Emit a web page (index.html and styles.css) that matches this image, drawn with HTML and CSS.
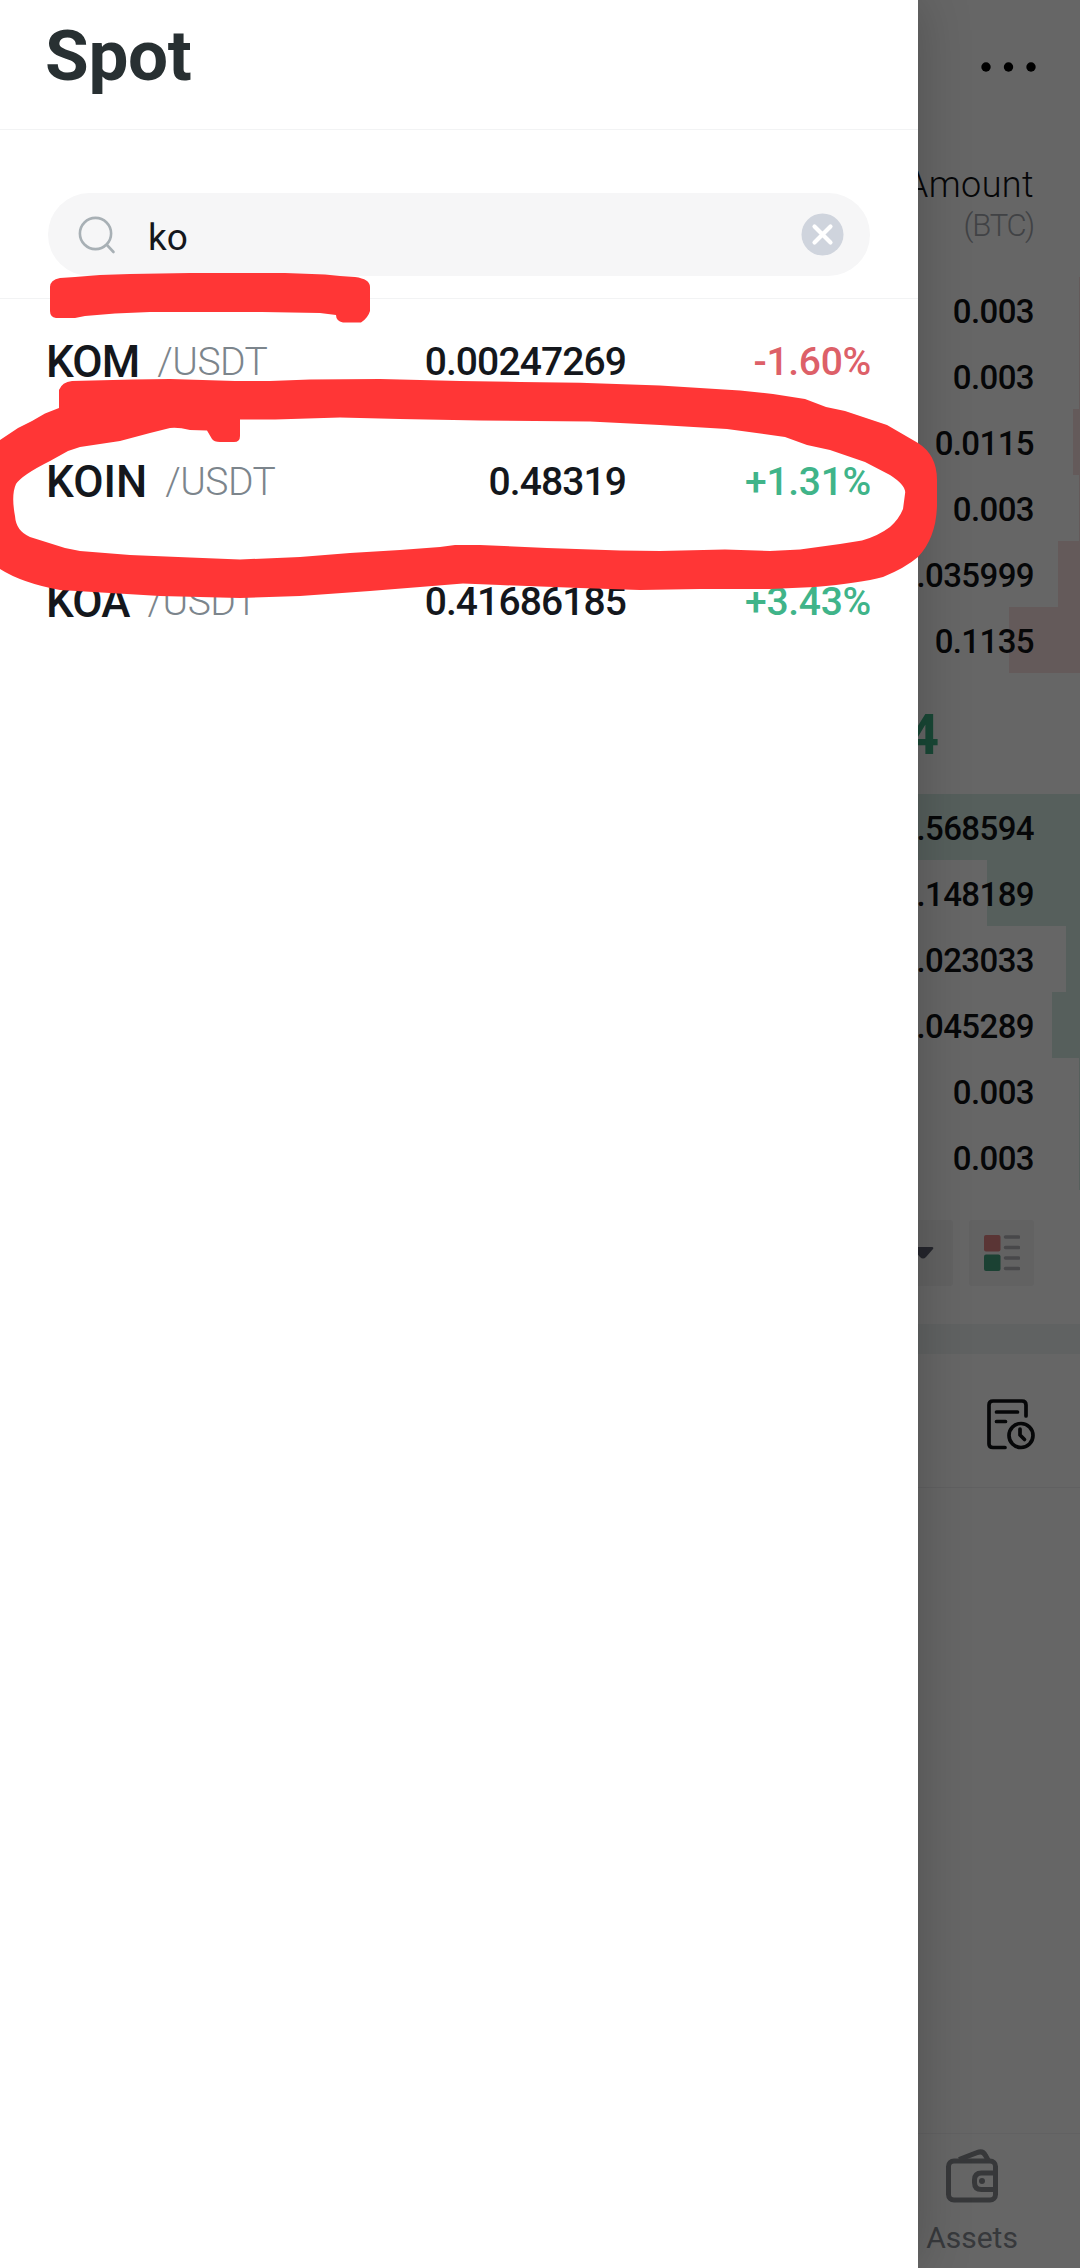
FILE: index.html
```
<!DOCTYPE html>
<html lang="en">
<head>
    <meta charset="UTF-8">
    <meta name="viewport" content="width=device-width, initial-scale=1.0">
    <title>Spot</title>
    <link rel="stylesheet" href="styles.css">
</head>
<body>

<div class="screen">
    <!-- trade page, dimmed behind the drawer -->
    <div class="trade">
        <div class="topbar">
            <svg width="56" height="12" viewBox="0 0 56 12">
                <circle cx="6" cy="6" r="4.7"/>
                <circle cx="28.500" cy="6" r="4.7"/>
                <circle cx="51" cy="6" r="4.7"/>
            </svg>
        </div>
        <div class="book-head">
            <div class="amount">Amount</div>
            <div class="unit">(BTC)</div>
        </div>
        <div class="asks">
            <div class="level"><i class="bar" style="width:1px"></i><span>0.003</span></div>
            <div class="level"><i class="bar" style="width:1px"></i><span>0.003</span></div>
            <div class="level"><i class="bar" style="width:7px"></i><span>0.0115</span></div>
            <div class="level"><i class="bar" style="width:1px"></i><span>0.003</span></div>
            <div class="level"><i class="bar" style="width:22px"></i><span>.035999</span></div>
            <div class="level"><i class="bar" style="width:71px"></i><span>0.1135</span></div>
        </div>
        <div class="last-price">4</div>
        <div class="bids">
            <div class="level"><i class="bar" style="width:180px"></i><span>.568594</span></div>
            <div class="level"><i class="bar" style="width:93px"></i><span>.148189</span></div>
            <div class="level"><i class="bar" style="width:14px"></i><span>.023033</span></div>
            <div class="level"><i class="bar" style="width:28px"></i><span>.045289</span></div>
            <div class="level"><i class="bar" style="width:1px"></i><span>0.003</span></div>
            <div class="level"><i class="bar" style="width:1px"></i><span>0.003</span></div>
        </div>
        <div class="tools">
            <div class="tool tool-select">
                <svg width="22" height="12" viewBox="0 0 22 12"><path d="M2 0h18q2 0 1 2l-7 8q-3 3-6 0l-7-8q-1-2 1-2z" fill="#5c6070"/></svg>
            </div>
            <div class="tool tool-depth">
                <svg width="36" height="36" viewBox="0 0 36 36">
                    <rect x="0" y="0" width="16.5" height="16.5" rx="2" fill="#e08484"/>
                    <rect x="0" y="19.5" width="16.5" height="16.5" rx="2" fill="#45a27f"/>
                    <path d="M21.500 2h13M21.500 12.500h13M21.500 23h13M21.500 33.500h13" stroke="#b4b4b8" stroke-width="3.6" stroke-linecap="round"/>
                </svg>
            </div>
        </div>
        <div class="divider"></div>
        <div class="orders-head">
            <svg width="48" height="52" viewBox="0 0 48 52" fill="none" stroke="#101216" stroke-width="3.7" stroke-linecap="round" stroke-linejoin="round">
                <path d="M39 17V6q0-4-4-4H6Q2 2 2 6V45q0 3.500 4 3.500H18M9.500 13H30.500M9.500 22.500H18.500"/>
                <circle cx="34" cy="36.500" r="12"/>
                <path d="M33 30v6l4.500 4.500"/>
            </svg>
        </div>
        <div class="tabbar">
            <div class="tab">
                <svg width="54" height="56" viewBox="0 0 54 56" fill="none" stroke="#8a8c92" stroke-width="5" stroke-linejoin="round">
                    <rect x="3.500" y="13" width="47" height="39" rx="5.500"/>
                    <path d="M50 25H36.500q-7 0-7 7v2.500q0 7 7 7H50M14 11.500 32 4.600q6-2.500 8.500 3l2.500 4.400"/>
                    <circle cx="37" cy="33" r="3" fill="#8a8c92" stroke="none"/>
                </svg>
                <span>Assets</span>
            </div>
        </div>
    </div>

    <div class="mask"></div>

    <div class="drawer">
        <div class="drawer-head">Spot</div>
        <div class="search-wrap">
            <div class="search">
                <svg width="38" height="38" viewBox="0 0 38 38" fill="none" stroke="#a8b0b5" stroke-width="2.6" stroke-linecap="round">
                    <circle cx="17.500" cy="17.500" r="15.600"/>
                    <path d="M29 29l6.500 7"/>
                </svg>
                <span class="search-text">ko</span>
                <svg width="43" height="43" viewBox="0 0 43 43">
                    <circle cx="21.500" cy="21.500" r="21" fill="#cfd4dd"/>
                    <path d="M13.500 13.500l16 16M29.500 13.500l-16 16" stroke="#fff" stroke-width="4.200" stroke-linecap="round"/>
                </svg>
            </div>
        </div>
        <div class="pairs">
            <div class="pair">
                <div class="name"><span class="coin">KOM</span><span class="quote">/USDT</span></div>
                <div class="price">0.00247269</div>
                <div class="change down">-1.60%</div>
            </div>
            <div class="pair">
                <div class="name"><span class="coin coin-long">KOIN</span><span class="quote">/USDT</span></div>
                <div class="price">0.48319</div>
                <div class="change up">+1.31%</div>
            </div>
            <div class="pair">
                <div class="name"><span class="coin">KOA</span><span class="quote">/USDT</span></div>
                <div class="price">0.41686185</div>
                <div class="change up">+3.43%</div>
            </div>
        </div>
    </div>

    <!-- red marker strokes -->
    <svg class="marker" width="1080" height="700" viewBox="0 0 1080 700">
        <path d="M50 287Q50 280 60 278L75 277 100 275 130 274 190 273H285L325 274.500 340 276 355 277Q370 279 370 287V311Q368 318 361 322.500H343Q336 321 336 315L320 313 262 312H150L115 313.500 85 316 75 318H56Q50 317 50 311Z"/>
        <path fill-rule="evenodd" d="M59 408V390Q62 382 72 381L133 379.500 170 379 235 381 270 381 310 379.500 380 379 460 381 520 382 580 382.700 660 385.500 740 390.500 773 394 805 399 826 407 845 411 887 425 918 443Q937 455 937 480V506Q936 538 918 557Q905 568 883 577Q860 583 815 587L770 589H700L640 590 580 588 500 585 463 583.500 420 587 370 591 300 596 240 598 160 596 60 590Q22 583 0 569L-8 560V448L0 440 18 428 32 421 45 413.500Z
            M240 419.500L275 419.500 340 417.500 400 419 480 420.500 590 421.500 660 425 727 429 785 437 807 445 830 450 865 462 890 475Q907 486 905 494L903 509Q899 519 890 527Q878 536 862 540.500L840 544 800 549.500 770 551 725 549.500 660 551 620 550.500 547 548 480 545 455 545 440 547 400 550 350 553 300 557 240 559.500 190 557.500 130 555 80 551 65 548 30 537Q16 531 15 516Q11 495 16 484Q22 475 50 461L68 451 80 447 120 441 150 433 170 428Q178 427 190 430L207 430.500 212 439Q214 442 220 442H234Q240 442 240 436Z"/>
    </svg>
</div>

</body>
</html>
```
FILE: styles.css
```
* {
    box-sizing: border-box;
}
body {
    margin: 0;
    background-color: #fff;
    font-family: Roboto, "Liberation Sans", Arial, sans-serif;
    color: #14171c;
}
svg {
    display: block;
    flex: none;
}
.screen {
    position: relative;
    width: 1080px;
    height: 2268px;
    overflow: hidden;
}

/* trade page */
.trade {
    width: 1080px;
    height: 2268px;
    display: flex;
    flex-direction: column;
    color: #101216;
}
.topbar {
    height: 134px;
    display: flex;
    align-items: center;
    justify-content: flex-end;
    padding-right: 44px;
}
.book-head {
    height: 143px;
    padding: 30px 46px 0 0;
    text-align: right;
    font-weight: 300;
}
.amount {
    font-size: 36px;
    line-height: 42px;
    letter-spacing: 0.4px;
}
.unit {
    font-size: 31px;
    line-height: 40px;
    letter-spacing: -1.2px;
    color: #a2a6ac;
}
.level {
    position: relative;
    height: 66px;
    padding: 1px 46px 0 0;
    font-size: 33px;
    font-weight: 500;
    line-height: 67px;
    letter-spacing: -0.6px;
    text-align: right;
}
.level span {
    position: relative;
}
.bar {
    position: absolute;
    top: 0;
    right: 0;
    height: 66px;
    background-color: #fbe0e1;
}
.bids .bar {
    background-color: #d8eee7;
}
.last-price {
    height: 121px;
    padding-right: 141px;
    font-size: 55px;
    font-weight: 700;
    line-height: 125px;
    text-align: right;
    color: #3fb488;
}
.tools {
    height: 134px;
    padding: 30px 46px 0 0;
    display: flex;
    justify-content: flex-end;
    gap: 16px;
}
.tool {
    height: 66px;
    border-radius: 3px;
    background-color: #f5f5f6;
    display: flex;
    align-items: center;
    justify-content: flex-end;
}
.tool-select {
    width: 200px;
    padding-right: 19px;
}
.tool-depth {
    width: 65px;
    justify-content: center;
}
.divider {
    height: 30px;
    background-color: #f0f5f4;
}
.orders-head {
    height: 134px;
    padding: 45px 45px 0 0;
    border-bottom: 1px solid #f0f0f2;
    display: flex;
    justify-content: flex-end;
}
.tabbar {
    height: 135px;
    margin-top: auto;
    border-top: 1px solid #f3f3f4;
    display: flex;
    justify-content: flex-end;
}
.tab {
    width: 216px;
    padding-top: 14px;
    display: flex;
    flex-direction: column;
    align-items: center;
    font-size: 30px;
    line-height: 68px;
    color: #8a8e96;
}
.mask {
    position: absolute;
    top: 0;
    left: 0;
    width: 1080px;
    height: 2268px;
    background-color: rgba(0, 0, 0, 0.6);
}

/* drawer */
.drawer {
    position: absolute;
    top: 0;
    left: 0;
    width: 918px;
    height: 2268px;
    background-color: #fff;
    box-shadow: 0 0 50px rgba(0, 0, 0, 0.22);
}
.drawer-head {
    height: 130px;
    padding: 26px 0 0 45px;
    border-bottom: 1px solid #f2f3f4;
    font-size: 71px;
    font-weight: 700;
    line-height: 60px;
    letter-spacing: -0.3px;
    color: #283032;
}
.search-wrap {
    height: 169px;
    padding: 63px 48px 0;
    border-bottom: 1px solid #f2f3f4;
}
.search {
    height: 83px;
    padding: 0 26px 0 30px;
    border-radius: 42px;
    background-color: #f6f6f7;
    display: flex;
    align-items: center;
}
.search-text {
    flex: 1;
    padding: 6px 0 0 32px;
    font-size: 37px;
    line-height: 44px;
}
.pairs {
    padding: 19px 47px 0 46px;
    display: flex;
    flex-direction: column;
    gap: 32px;
}
.pair {
    height: 88px;
    display: flex;
    align-items: center;
    font-size: 39px;
    font-weight: 500;
    line-height: 88px;
}
.name {
    width: 300px;
    display: flex;
}
.coin {
    margin-right: 18px;
    font-size: 44px;
    letter-spacing: -0.9px;
}
.coin-long {
    letter-spacing: 0;
}
.quote {
    font-weight: 300;
    letter-spacing: -0.5px;
    color: #7c858c;
}
.price {
    width: 280px;
    text-align: right;
    letter-spacing: -0.9px;
}
.change {
    flex: 1;
    text-align: right;
    letter-spacing: -0.3px;
}
.up {
    color: #40b489;
}
.down {
    color: #dd6068;
}

.marker {
    position: absolute;
    top: 0;
    left: 0;
    fill: #ff3636;
}
```
